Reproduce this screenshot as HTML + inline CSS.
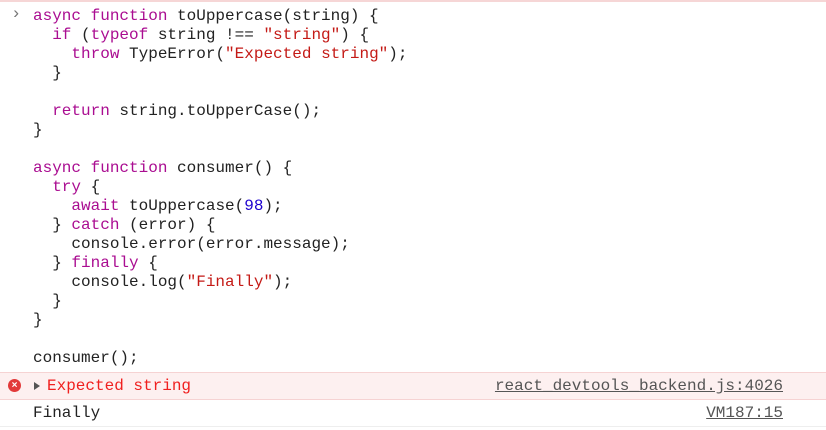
<!DOCTYPE html>
<html><head><style>
body{margin:0;width:826px;height:430px;background:#fff;overflow:hidden;font-family:"Liberation Mono",monospace;font-size:16px;color:#222;}
.top{position:absolute;left:0;top:0;width:826px;height:2px;background:#f6d6d6;}
pre{position:absolute;left:33px;top:7px;margin:0;font:inherit;line-height:19px;}
.k{color:#aa0d91;}.s{color:#c41a16;}.n{color:#1c00cf;}
.chev{position:absolute;left:11px;top:5px;color:#777;font-size:17px;}
.err{position:absolute;left:0;top:372px;width:826px;height:26px;background:#fdf0f0;border-top:1px solid #f6d3d3;border-bottom:1px solid #f6d3d3;}
.row{position:absolute;left:0;top:399px;width:826px;height:27px;border-bottom:1px solid #eee;}
.ic{position:absolute;left:8px;top:6px;width:13px;height:13px;border-radius:50%;background:#e23a3a;color:#fff;font:bold 10px/13px "Liberation Sans",sans-serif;text-align:center;}
.tri{position:absolute;left:34px;top:9px;width:0;height:0;border-left:6px solid #555;border-top:4px solid transparent;border-bottom:4px solid transparent;}
.t{position:absolute;top:4px;line-height:19px;}
.link{position:absolute;right:43px;top:4px;line-height:19px;text-decoration:underline;color:#555;}
</style></head><body>
<div class="top"></div>
<div class="chev">›</div>
<pre><span class="k">async function</span> toUppercase(string) {
  <span class="k">if</span> (<span class="k">typeof</span> string !== <span class="s">"string"</span>) {
    <span class="k">throw</span> TypeError(<span class="s">"Expected string"</span>);
  }

  <span class="k">return</span> string.toUpperCase();
}

<span class="k">async function</span> consumer() {
  <span class="k">try</span> {
    <span class="k">await</span> toUppercase(<span class="n">98</span>);
  } <span class="k">catch</span> (error) {
    console.error(error.message);
  } <span class="k">finally</span> {
    console.log(<span class="s">"Finally"</span>);
  }
}

consumer();</pre>
<div class="err"><div class="ic">×</div><div class="tri"></div><div class="t" style="left:47px;color:#f0201f">Expected string</div><div class="link">react_devtools_backend.js:4026</div></div>
<div class="row"><div class="t" style="left:33px;top:5px">Finally</div><div class="link" style="top:5px">VM187:15</div></div>
</body></html>
